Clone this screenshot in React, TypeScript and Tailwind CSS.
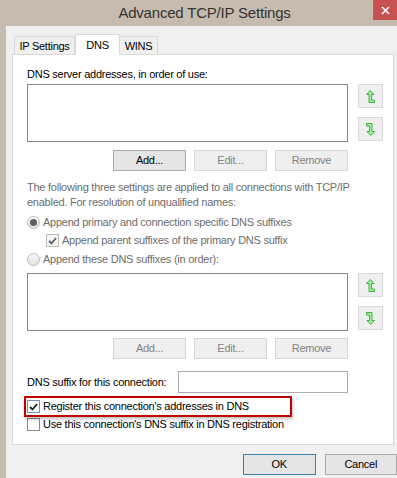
import React from "react";

const font = { fontFamily: '"Liberation Sans", Arial, sans-serif' };

function Arrow({ down }: { down?: boolean }) {
  return (
    <svg width="9" height="13" viewBox="0 0 9 13" className={down ? "rotate-180" : ""}>
      <path
        d="M4.25 0.5 L8 4.5 L5.5 4.5 L5.5 10 L8.5 10 L8.5 12.5 L3 12.5 L3 4.5 L0.5 4.5 Z"
        fill="#a6eba6"
        stroke="#3fb33f"
        strokeWidth="1"
      />
    </svg>
  );
}

function ArrowBtn({ down }: { down?: boolean }) {
  return (
    <div className="flex h-[24px] w-[25px] items-center justify-center border border-[#d9d9d9] bg-[#efefef]">
      <Arrow down={down} />
    </div>
  );
}

function Btn({ label, disabled }: { label: string; disabled?: boolean }) {
  return (
    <div
      className={
        "flex h-[21px] w-[73px] items-center justify-center border " +
        (disabled
          ? "border-[#d5d5d5] bg-[#efefef] text-[#838383]"
          : "border-[#acacac] bg-[#e5e5e5] text-black")
      }
    >
      {label}
    </div>
  );
}

function ListBlock({ disabled }: { disabled?: boolean }) {
  return (
    <div className={"flex flex-col " + (disabled ? "gap-[7px]" : "gap-[8px]")}>
      <div className="flex">
        <div className="h-[58px] w-[321px] border border-[#82878f] bg-white" />
        <div className="ml-[10px] flex flex-col gap-[9px]">
          <ArrowBtn />
          <ArrowBtn down />
        </div>
      </div>
      <div className="flex w-[321px] justify-end gap-[8px]">
        <Btn label="Add..." disabled={disabled} />
        <Btn label="Edit..." disabled />
        <Btn label="Remove" disabled />
      </div>
    </div>
  );
}

function Radio({ checked }: { checked?: boolean }) {
  return (
    <div className="flex h-[13px] w-[13px] shrink-0 items-center justify-center rounded-full border border-[#bcbcbc] bg-gradient-to-b from-[#f6f6f6] to-[#e3e3e3]">
      {checked && <div className="h-[7px] w-[7px] rounded-full bg-[#5e5e5e]" />}
    </div>
  );
}

function Check({ checked, disabled, focus }: { checked?: boolean; disabled?: boolean; focus?: boolean }) {
  return (
    <div
      className={
        "flex h-[13px] w-[13px] shrink-0 items-center justify-center border " +
        (focus ? "border-[#6f8fbf] bg-white" : disabled ? "border-[#bcbcbc] bg-[#f4f4f4]" : "border-[#8a8a8a] bg-white")
      }
    >
      {checked && (
        <svg width="9" height="8" viewBox="0 0 9 8">
          <path d="M1 4 L3.5 6.5 L8 1" fill="none" stroke={disabled ? "#5f5f5f" : "#222"} strokeWidth="1.8" />
        </svg>
      )}
    </div>
  );
}

export default function App() {
  return (
    <div
      className="relative h-[478px] w-[397px] overflow-hidden whitespace-nowrap bg-[#c5bbaf] text-[11px] tracking-[-0.25px]"
      style={font}
    >
      <div className="flex h-[26px] items-center justify-center pl-[12px] pt-[1px] text-[15px] tracking-[-0.2px] text-[#333]">
        Advanced TCP/IP Settings
      </div>
      <div className="absolute right-0 top-0 flex h-[20px] w-[24px] items-center justify-center bg-[#c75050]">
        <svg width="9" height="9" viewBox="0 0 9 9">
          <path d="M1 1 L8 8 M8 1 L1 8" stroke="#fff" strokeWidth="1.6" />
        </svg>
      </div>

      <div className="ml-[6px] h-[452px] bg-[#f0f0f0] pl-[6px] pt-[8px]">
        <div className="flex h-[20px] items-end pl-[2px]">
          <div className="flex h-[18px] w-[61px] items-center justify-center border border-b-0 border-[#d9d9d9] bg-[#f0f0f0] pt-[1px]">
            IP Settings
          </div>
          <div className="relative z-10 -mb-[1px] flex h-[21px] w-[45px] items-start justify-center border border-b-0 border-[#d9d9d9] bg-white pt-[2px]">
            DNS
          </div>
          <div className="flex h-[18px] w-[38px] items-center justify-center border border-b-0 border-l-0 border-[#d9d9d9] bg-[#f0f0f0] pt-[1px]">
            WINS
          </div>
        </div>

        <div className="h-[391px] w-[382px] border border-[#d9d9d9] bg-white pl-[14px]">
          <div className="mt-[12px] leading-[15px]">DNS server addresses, in order of use:</div>
          <div className="mt-[2px]">
            <ListBlock />
          </div>

          <div className="mt-[9px] leading-[15px] text-[#6d6d6d]">
            The following three settings are applied to all connections with TCP/IP
            <br />
            enabled. For resolution of unqualified names:
          </div>
          <div className="mt-[5px] flex h-[15px] items-center gap-[3px] text-[#6d6d6d]">
            <Radio checked />
            <span>Append primary and connection specific DNS suffixes</span>
          </div>
          <div className="mt-[3px] flex h-[15px] items-center gap-[3px] pl-[19px] text-[#6d6d6d]">
            <Check checked disabled />
            <span>Append parent suffixes of the primary DNS suffix</span>
          </div>
          <div className="mt-[4px] flex h-[15px] items-center gap-[3px] text-[#6d6d6d]">
            <Radio />
            <span>Append these DNS suffixes (in order):</span>
          </div>
          <div className="mt-[6px]">
            <ListBlock disabled />
          </div>

          <div className="mt-[12px] flex w-[321px] items-center justify-between">
            <span>DNS suffix for this connection:</span>
            <div className="h-[22px] w-[170px] border border-[#abadb3] bg-white" />
          </div>

          <div className="relative mt-[6px] flex h-[15px] items-center gap-[3px]">
            <div className="absolute -left-[3px] -top-[3px] h-[21px] w-[268px] border-2 border-[#c00000] shadow-[1px_2px_3px_rgba(0,0,0,0.25)]" />
            <Check checked focus />
            <span>Register this connection's addresses in DNS</span>
          </div>
          <div className="mt-[3px] flex h-[15px] items-center gap-[3px]">
            <Check />
            <span>Use this connection's DNS suffix in DNS registration</span>
          </div>
        </div>

        <div className="mt-[9px] flex gap-[9px] pl-[231px]">
          <div className="flex h-[21px] w-[73px] items-center justify-center border border-[#3c7fb1] bg-[#e5e5e5]">OK</div>
          <div className="flex h-[21px] w-[73px] items-center justify-center border border-[#acacac] bg-[#e5e5e5]">Cancel</div>
        </div>
      </div>
    </div>
  );
}
